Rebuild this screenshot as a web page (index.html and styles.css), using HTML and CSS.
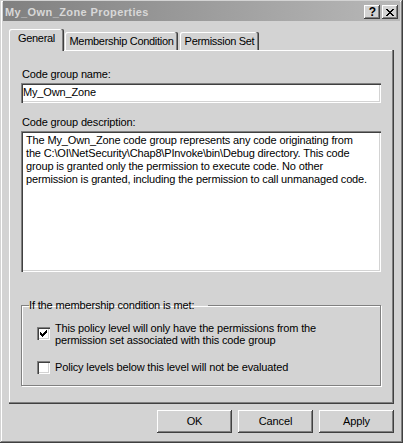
FILE: index.html
```html
<!DOCTYPE html>
<html>
<head>
<meta charset="utf-8">
<title>My_Own_Zone Properties</title>
<link rel="stylesheet" href="styles.css">
</head>
<body>
<div class="window">
  <div class="titlebar">
    <span class="title">My_Own_Zone Properties</span>
    <div class="caption-buttons">
      <span class="cap-btn cap-help">?</span>
      <span class="cap-btn cap-close"><svg width="8" height="7" viewBox="0 0 8 7" shape-rendering="crispEdges"><path d="M0 0h2v1H0zM6 0h2v1H6zM1 1h2v1H1zM5 1h2v1H5zM2 2h4v1H2zM3 3h2v1H3zM2 4h4v1H2zM1 5h2v1H1zM5 5h2v1H5zM0 6h2v1H0zM6 6h2v1H6z" fill="#000"/></svg></span>
    </div>
  </div>
  <div class="tabs">
    <div class="tab tab-active tab-general">General</div>
    <div class="tab tab-member">Membership Condition</div>
    <div class="tab tab-perm">Permission Set</div>
  </div>
  <div class="panel">
    <div class="label">Code group name:</div>
    <div class="edit">My_Own_Zone</div>
    <div class="label label-desc">Code group description:</div>
    <div class="edit edit-multi">The My_Own_Zone code group represents any code originating from<br>the C:\OI\NetSecurity\Chap8\PInvoke\bin\Debug directory. This code<br>group is granted only the permission to execute code. No other<br>permission is granted, including the permission to call unmanaged code.</div>
    <fieldset class="group">
      <legend class="group-title">If the membership condition is met:</legend>
      <div class="check-row check-row-multi">
        <span class="cb"><svg width="7" height="7" viewBox="0 0 7 7" shape-rendering="crispEdges"><path d="M6 0h1v1H6zM5 1h2v1H5zM0 2h1v1H0zM4 2h3v1H4zM0 3h2v1H0zM3 3h3v1H3zM0 4h5v1H0zM1 5h3v1H1zM2 6h1v1H2z" fill="#000"/></svg></span>
        <span class="cb-text">This policy level will only have the permissions from the<br>permission set associated with this code group</span>
      </div>
      <div class="check-row check-row-single">
        <span class="cb"></span>
        <span class="cb-text">Policy levels below this level will not be evaluated</span>
      </div>
    </fieldset>
  </div>
  <div class="buttons">
    <div class="btn">OK</div>
    <div class="btn">Cancel</div>
    <div class="btn">Apply</div>
  </div>
</div>
</body>
</html>
```
FILE: styles.css
```css
* { box-sizing: border-box; }
html, body { margin: 0; padding: 0; }
body {
  background: #d3d3d3;
  font-family: "Liberation Sans", Arial, sans-serif;
  font-size: 11px;
  line-height: 13px;
  letter-spacing: -0.15px;
  color: #000;
}
.window {
  width: 403px;
  height: 443px;
  background: #d3d3d3;
  padding: 1px 3px 2px 3px;
  box-shadow: inset -1px -1px #404040, inset 1px 1px #d3d3d3, inset -2px -2px #808080, inset 2px 2px #ffffff;
}
.titlebar {
  height: 20px;
  display: flex;
  align-items: flex-start;
  justify-content: space-between;
  padding: 0 2px;
  background: linear-gradient(to right, #808080, #b8b8b8);
}
.title {
  margin-top: 5px;
  font-weight: bold;
  color: #d8d8d8;
  letter-spacing: 0.4px;
  white-space: nowrap;
}
.caption-buttons {
  display: flex;
  gap: 2px;
  margin-top: 4px;
}
.cap-btn {
  width: 16px;
  height: 14px;
  display: flex;
  align-items: center;
  justify-content: center;
  background: #d3d3d3;
  box-shadow: inset -1px -1px #404040, inset 1px 1px #ffffff, inset -2px -2px #808080;
}
.cap-help {
  font-weight: bold;
  font-size: 12px;
  line-height: 12px;
  letter-spacing: 0;
  padding-left: 1px;
}
.cap-close svg { display: block; margin-left: -1px; }
.tabs {
  display: flex;
  align-items: flex-end;
  height: 21px;
  margin: 8px 0 0 6px;
}
.tab {
  height: 18px;
  padding-top: 3px;
  text-align: center;
  white-space: nowrap;
  letter-spacing: -0.3px;
  background: #d3d3d3;
  border-radius: 2px 2px 0 0;
  box-shadow: inset -1px 0 #404040, inset -2px 0 #808080, inset 1px 1px #ffffff;
}
.tab-active {
  position: relative;
  z-index: 1;
  height: 22px;
  margin-bottom: -1px;
}
.tab-general { width: 55px; }
.tab-member { width: 113px; margin-left: 1px; }
.tab-perm { width: 79px; margin-left: 2px; }
.panel {
  height: 354px;
  margin: 0 6px;
  padding: 18px 13px 0 12px;
  box-shadow: inset -1px -1px #404040, inset -2px -2px #808080, inset 1px 1px #ffffff;
}
.label {
  margin: 0 0 2px 1px;
  white-space: nowrap;
}
.label-desc { margin-top: 13px; }
.edit {
  width: 360px;
  height: 20px;
  padding: 3px 2px;
  background: #ffffff;
  white-space: nowrap;
  box-shadow: inset 1px 1px #808080, inset 2px 2px #404040, inset -1px -1px #ffffff, inset -2px -2px #d3d3d3;
}
.edit-multi {
  height: 141px;
  padding: 3px 5px;
}
.group {
  width: 360px;
  margin: 27px 0 0 0;
  padding: 10px 0 11px 7px;
  border: 1px solid #808080;
  box-shadow: inset 1px 1px #ffffff, 1px 1px #ffffff;
}
.group-title {
  padding: 0 14px 0 0;
  margin: 0;
  white-space: nowrap;
}
.check-row {
  display: flex;
  align-items: flex-start;
  gap: 5px;
  margin-left: 8px;
  line-height: 12px;
}
.check-row-single { margin-top: 15px; }
.check-row-multi .cb { margin-top: 5px; }
.cb {
  flex: none;
  width: 13px;
  height: 13px;
  padding: 3px;
  background: #ffffff;
  box-shadow: inset 1px 1px #808080, inset 2px 2px #404040, inset -1px -1px #ffffff, inset -2px -2px #d3d3d3;
}
.cb svg { display: block; }
.cb-text { white-space: nowrap; }
.buttons {
  display: flex;
  justify-content: flex-end;
  gap: 6px;
  margin-top: 6px;
  padding-right: 6px;
}
.btn {
  width: 75px;
  height: 23px;
  padding-top: 5px;
  text-align: center;
  background: #d3d3d3;
  box-shadow: inset -1px -1px #404040, inset 1px 1px #ffffff, inset -2px -2px #808080;
}
```
